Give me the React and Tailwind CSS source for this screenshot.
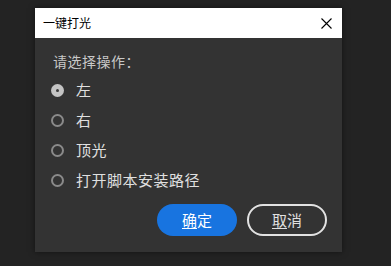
import React, { useState } from 'react';

const options = ['左', '右', '顶光', '打开脚本安装路径'];

const Radio = ({ checked }) =>
  checked ? (
    <span className="w-[13px] h-[13px] rounded-full bg-[#c4c4c4] flex items-center justify-center">
      <span className="w-[3px] h-[3px] rounded-full bg-[#3a3a3a]" />
    </span>
  ) : (
    <span className="w-[13px] h-[13px] rounded-full border-2 border-[#8a8a8a]" />
  );

const App = () => {
  const [selected, setSelected] = useState(0);

  return (
    <div
      className="w-[391px] h-[266px] bg-[#232323] pt-[8px] pl-[35px]"
      style={{ fontFamily: '"Noto Sans CJK SC", "Noto Sans", sans-serif' }}
    >
      <div className="w-[307px] h-[244px] bg-[#333333] flex flex-col shadow-[0_0_6px_rgba(0,0,0,0.5)]">
        <div className="h-[30px] bg-white flex items-center justify-between pl-[8px] pr-[10px]">
          <span className="text-[12px] text-black leading-none">一键打光</span>
          <svg width="11" height="11" viewBox="0 0 11 11">
            <path d="M0.5 0.5 L10.5 10.5 M10.5 0.5 L0.5 10.5" stroke="#000" strokeWidth="1.1" />
          </svg>
        </div>
        <div className="flex flex-col pl-[16px] pt-[13px]">
          <div className="pl-[2px] text-[14px] leading-[20px] text-[#c8c8c8] tracking-[0.5px]">请选择操作：</div>
          <div className="flex flex-col mt-[4px]">
            {options.map((o, i) => (
              <div
                key={o}
                className="h-[30px] flex items-center cursor-pointer"
                onClick={() => setSelected(i)}
              >
                <Radio checked={selected === i} />
                <span className="ml-[12px] text-[15px] text-[#e0e0e0] tracking-[0.5px]">{o}</span>
              </div>
            ))}
          </div>
        </div>
        <div className="flex justify-end gap-[10px] pr-[15px] mt-[9px]">
          <button className="w-[80px] h-[32px] rounded-full bg-[#1874e0] text-white text-[15px] flex items-center justify-center">
            <span className="underline underline-offset-2">确</span>定
          </button>
          <button className="w-[80px] h-[32px] rounded-full border-2 border-[#e2e2e2] text-[#e0e0e0] text-[15px] flex items-center justify-center">
            <span className="underline underline-offset-2">取</span>消
          </button>
        </div>
      </div>
    </div>
  );
};

export default App;
